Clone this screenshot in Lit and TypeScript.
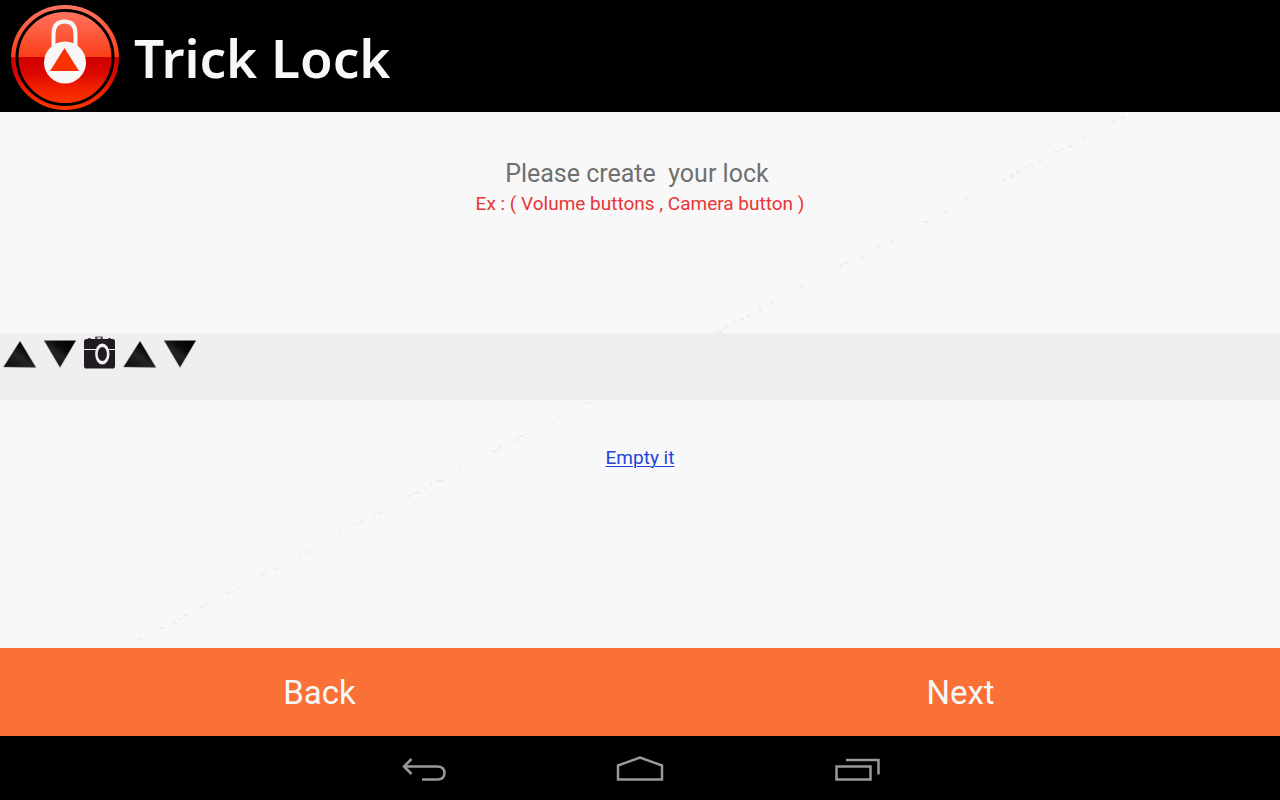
import { LitElement, html, svg, css } from "lit";
import { customElement, state } from "lit/decorators.js";

type Key = "up" | "down" | "camera";

// Faint paper flecks: x, y, width, height in the 1280x536 backdrop.
const FLECKS: number[][] = [
  [1121, 4, 4, 3], [1112, 8, 3, 3], [1108, 10, 1, 2], [1084, 24, 3, 1], [1081, 26, 4, 2], [1076, 28, 3, 2],
  [1068, 33, 4, 3], [1060, 36, 4, 2], [1054, 38, 5, 3], [1038, 48, 4, 2], [1029, 52, 4, 1], [1025, 54, 3, 2],
  [1016, 59, 5, 3], [1010, 62, 4, 4], [1009, 63, 5, 2], [1001, 67, 5, 2], [1001, 69, 2, 1], [979, 79, 3, 2],
  [965, 86, 3, 2], [943, 98, 3, 1], [944, 99, 5, 2], [936, 102, 2, 1], [923, 109, 7, 2], [913, 116, 3, 2],
  [905, 119, 3, 2], [890, 128, 3, 2], [877, 134, 3, 2], [861, 144, 3, 2], [843, 150, 5, 2], [840, 152, 2, 3],
  [834, 156, 4, 1], [800, 174, 3, 2], [776, 186, 5, 1], [770, 190, 3, 3], [764, 194, 4, 1], [759, 196, 3, 4],
  [747, 202, 4, 3], [740, 206, 4, 2], [733, 209, 4, 2], [725, 214, 4, 1], [723, 215, 4, 2], [718, 218, 4, 3],
  [713, 220, 3, 1], [584, 290, 6, 2], [581, 291, 5, 1], [577, 293, 3, 1], [572, 298, 2, 2], [558, 304, 3, 2],
  [548, 308, 3, 2], [524, 321, 3, 2], [519, 323, 5, 2], [516, 326, 3, 2], [515, 328, 5, 1], [498, 334, 3, 3],
  [492, 338, 6, 2], [459, 356, 3, 2], [446, 363, 4, 1], [443, 365, 3, 2], [436, 368, 8, 2], [429, 371, 3, 3],
  [424, 375, 2, 3], [413, 380, 7, 2], [408, 383, 3, 2], [405, 385, 4, 1], [382, 397, 3, 2], [377, 400, 4, 2],
  [373, 402, 3, 2], [363, 407, 3, 1], [360, 408, 3, 2], [356, 411, 3, 2], [339, 420, 3, 2], [326, 427, 3, 1],
  [304, 439, 5, 2], [298, 441, 3, 2], [273, 456, 4, 2], [265, 459, 3, 2], [261, 462, 4, 2], [245, 471, 2, 2],
  [238, 475, 3, 2], [227, 479, 4, 3], [207, 490, 3, 2], [203, 492, 5, 2], [200, 494, 3, 3], [184, 502, 4, 2],
  [178, 506, 3, 2], [173, 508, 3, 2], [172, 510, 5, 2], [160, 515, 5, 2], [152, 519, 3, 2], [139, 526, 4, 3],
];

const ICONS: Record<Key, { label: string; art: unknown }> = {
  up: {
    label: "Volume up",
    art: svg`<path d="M20 8 L36 34.500 L3.500 34 Z" fill="url(#ink)" stroke="#8a8a8a" stroke-width=".4"/>`,
  },
  down: {
    label: "Volume down",
    art: svg`<path d="M4 7.500 L36 7.500 L20 34.500 Z" fill="url(#ink)" stroke="#8a8a8a" stroke-width=".4"/>`,
  },
  camera: {
    label: "Camera",
    art: svg`
      <path d="M15 6.500V4.500Q15 3.500 16 3.500H22Q23 3.500 23 4.500V6.500" fill="#555"/>
      <rect x="17.500" y="4.500" width="3" height="1.500" fill="#eee"/>
      <rect x="8" y="5" width="3" height="2" fill="#555"/><rect x="28" y="5" width="3" height="2" fill="#555"/>
      <rect x="4" y="6" width="31" height="29.500" rx="2.500" fill="#211a22"/>
      <path d="M5 35.500H34" stroke="#8b878b" stroke-width="1"/>
      <path d="M4 16.500H35" stroke="#efefef" stroke-width="1"/>
      <ellipse cx="22.300" cy="21" rx="7.200" ry="10.500" fill="#efefef"/>
      <ellipse cx="22.300" cy="21" rx="4.600" ry="7" fill="#211a22"/>`,
  },
};

@customElement("app-root")
export class AppRoot extends LitElement {
  @state() private keys: Key[] = ["up", "down", "camera", "up", "down"];

  static styles = css`
    :host {
      display: flex;
      flex-direction: column;
      min-height: 100vh;
      background: #f8f8f8;
      font-family: Roboto, sans-serif;
    }
    svg { display: block; }
    .header {
      display: flex;
      align-items: center;
      gap: 14px;
      height: 112px;
      padding: 0 8px;
      background: #000;
      box-sizing: border-box;
    }
    .title {
      margin: 0;
      padding-top: 4px;
      color: #f8f8f8;
      font: 600 53px/64px "Noto Sans", sans-serif;
    }
    .content {
      position: relative;
      flex: 1;
      display: grid;
      grid-template-rows: 221fr 67px 248fr;
    }
    .flecks {
      position: absolute;
      inset: 0;
      width: 100%;
      height: 100%;
    }
    .intro, .actions {
      position: relative;
      text-align: center;
      box-sizing: border-box;
    }
    .intro { padding-top: 46px; }
    .actions { padding-top: 46px; }
    .prompt, .example { margin: 0; white-space: break-spaces; }
    .prompt { color: #707070; font-size: 25px; line-height: 32px; }
    .example { color: #e83537; font-size: 19px; line-height: 28px; }
    .strip {
      position: relative;
      display: flex;
      background: #efefef;
    }
    .empty {
      color: #2346d8;
      font-size: 19px;
      line-height: 24px;
      text-decoration-thickness: 1px;
      text-underline-offset: 2px;
    }
    .footer { display: flex; height: 88px; background: #fa7137; }
    .step {
      flex: 1;
      border: 0;
      padding: 2px 0 0;
      background: none;
      color: #f8f8f8;
      font: 400 33px/40px Roboto, sans-serif;
      cursor: pointer;
    }
    .divider { width: 2px; background: #f0713f; }
    .navbar {
      display: flex;
      justify-content: center;
      gap: 136px;
      height: 64px;
      background: #000;
    }
    .nav { width: 80px; padding: 0; border: 0; background: none; cursor: pointer; }
  `;

  private empty(e: Event) {
    e.preventDefault();
    this.keys = [];
  }

  render() {
    return html`
      <header class="header">
        <svg width="112" height="112" viewBox="0 0 112 112" aria-hidden="true">
          <defs>
            <linearGradient id="face" x1="0" y1="0" x2="0" y2="1">
              <stop offset="0" stop-color="#ff7560"/><stop offset=".5" stop-color="#fb3e18"/>
              <stop offset=".5" stop-color="#cf0000"/><stop offset=".68" stop-color="#dc0800"/>
              <stop offset=".8" stop-color="#ee1d00"/><stop offset="1" stop-color="#ff3600"/>
            </linearGradient>
          </defs>
          <ellipse cx="57" cy="57.500" rx="54" ry="52.500" fill="url(#face)"/>
          <ellipse cx="57" cy="57.500" rx="48" ry="47" fill="url(#face)" stroke="#000" stroke-width="3"/>
          <path d="M45.500 47V34Q45.500 21.500 56.500 21.500T67.500 34V47" fill="none" stroke="#f8f8f8" stroke-width="4"/>
          <circle cx="57" cy="62.500" r="21" fill="#f8f8f8"/>
          <path d="M56.500 48L71 71H42Z" fill="#fa3200"/>
        </svg>
        <h1 class="title">Trick Lock</h1>
      </header>
      <main class="content">
        <svg class="flecks" viewBox="0 0 1280 536" preserveAspectRatio="none" aria-hidden="true">
          ${FLECKS.map(([x, y, w, h]) => svg`<rect x=${x} y=${y} width=${w} height=${h} fill="#efefef"/>`)}
        </svg>
        <section class="intro">
          <p class="prompt">Please create  your lock </p>
          <p class="example">Ex : ( Volume buttons , Camera button )</p>
        </section>
        <div class="strip">
          ${this.keys.map(
            (k) => html`<svg width="40" height="40" viewBox="0 0 40 40" role="img" aria-label=${ICONS[k].label}>
              <defs>
                <linearGradient id="ink" x1="0" y1="1" x2="1" y2="0">
                  <stop offset="0" stop-color="#080808"/><stop offset=".45" stop-color="#242424"/>
                  <stop offset=".65" stop-color="#0a0a0a"/><stop offset="1" stop-color="#000"/>
                </linearGradient>
              </defs>
              ${ICONS[k].art}
            </svg>`
          )}
        </div>
        <section class="actions">
          <a class="empty" href="#" @click=${this.empty}>Empty it</a>
        </section>
      </main>
      <footer class="footer">
        <button class="step">Back</button>
        <span class="divider"></span>
        <button class="step">Next</button>
      </footer>
      <nav class="navbar">
        <button class="nav" aria-label="Back">
          <svg width="80" height="64" viewBox="0 0 80 64" fill="none" stroke="#999" stroke-width="2.500">
            <path d="M20 30.500H53Q60.500 30.500 60.500 37T53 43.500H38M27.500 23L20 30.500L27.500 38"/>
          </svg>
        </button>
        <button class="nav" aria-label="Home">
          <svg width="80" height="64" viewBox="0 0 80 64" fill="none" stroke="#999" stroke-width="2.500">
            <path d="M18 43.500V29.500L40 21.500L62 29.500V43.500Z"/>
          </svg>
        </button>
        <button class="nav" aria-label="Recent apps">
          <svg width="80" height="64" viewBox="0 0 80 64" fill="none" stroke="#999" stroke-width="2.500">
            <path d="M20.500 30.500H54.500V43.500H20.500ZM30 24H62.500V38.500"/>
          </svg>
        </button>
      </nav>
    `;
  }
}
